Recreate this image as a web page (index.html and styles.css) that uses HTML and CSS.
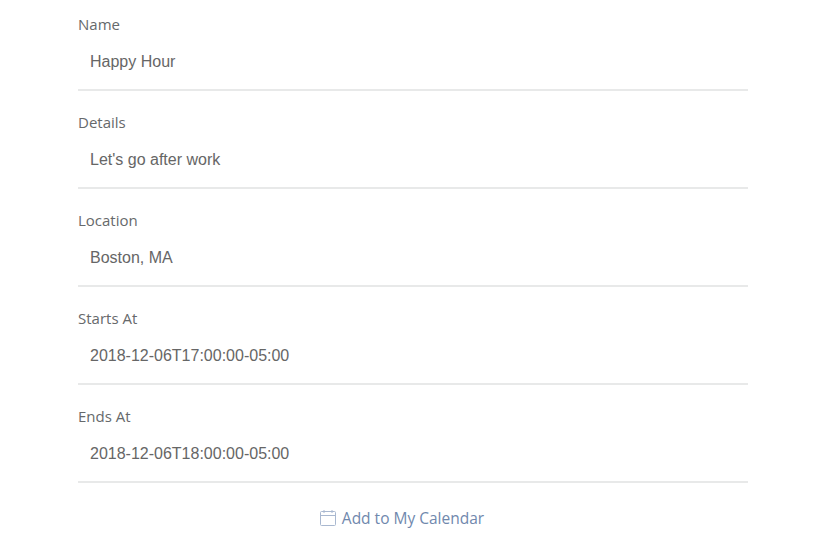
FILE: index.html
```html
<!DOCTYPE html>
<html lang="en">

<head>
    <meta charset="UTF-8">
    <title>Add to Calendar</title>
    <link rel="stylesheet" href="styles.css">
</head>

<body>
    <form class="event-form">
        <div class="field">
            <label for="name">Name</label>
            <input id="name" type="text" value="Happy Hour">
        </div>
        <div class="field">
            <label for="details">Details</label>
            <input id="details" type="text" value="Let's go after work">
        </div>
        <div class="field">
            <label for="location">Location</label>
            <input id="location" type="text" value="Boston, MA">
        </div>
        <div class="field">
            <label for="starts">Starts At</label>
            <input id="starts" type="text" value="2018-12-06T17:00:00-05:00">
        </div>
        <div class="field">
            <label for="ends">Ends At</label>
            <input id="ends" type="text" value="2018-12-06T18:00:00-05:00">
        </div>
        <a class="add-link" href="#">
            <svg class="cal-icon" width="16" height="16" viewBox="0 0 16 16" fill="none" stroke="currentColor" stroke-width="1">
                <rect x="0.5" y="1.5" width="15" height="14" rx="1"></rect>
                <path d="M0.5 5.5H15.5M4 0V3M12 0V3"></path>
            </svg>
            Add to My Calendar
        </a>
    </form>
</body>

</html>
```

FILE: styles.css
```css
body {
    margin: 0;
    background-color: white;
    font-family: "Open Sans", sans-serif;
}

.event-form {
    width: 670px;
    margin-left: 78px;
    padding-top: 14px;
}

.field {
    box-sizing: border-box;
    height: 77px;
    margin-bottom: 21px;
    border-bottom: 2px solid #e8e9e9;
}

.field label {
    display: block;
    height: 20px;
    line-height: 20px;
    font-size: 15px;
    color: #66696b;
}

.field input {
    display: block;
    width: 100%;
    box-sizing: border-box;
    margin-top: 13px;
    padding: 0 12px;
    height: 30px;
    border: none;
    outline: none;
    font-family: "Liberation Sans", sans-serif;
    font-size: 16px;
    color: #666;
}

.add-link {
    display: flex;
    align-items: center;
    justify-content: center;
    gap: 6px;
    margin-top: 24px;
    padding-right: 22px;
    font-size: 15.5px;
    color: #7088ad;
    text-decoration: none;
}

.cal-icon {
    color: #a9b8d0;
}
```
